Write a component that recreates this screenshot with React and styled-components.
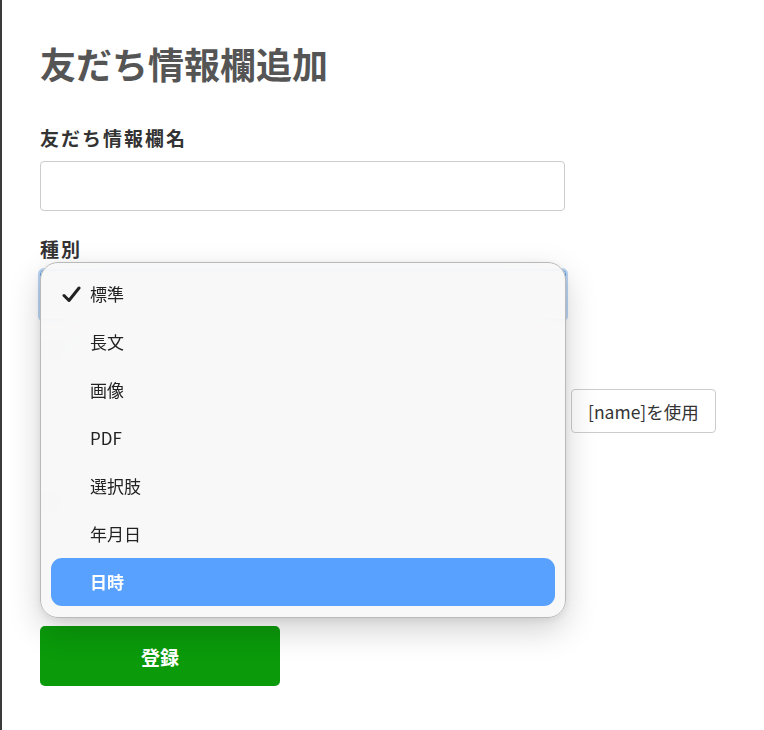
import React from 'react';
import styled, { createGlobalStyle } from 'styled-components';

const Global = createGlobalStyle`
  body {
    margin: 0;
    background: #fff;
    font-family: "Noto Sans CJK JP", "Noto Sans", sans-serif;
    color: #333;
  }
`;

const Page = styled.div`
  min-height: 730px;
  border-left: 2px solid #3a3a3a;
  padding: 38px 0 40px 38px;
  box-sizing: border-box;
`;

const Title = styled.h1`
  margin: 0;
  font-size: 36px;
  line-height: 50px;
  font-weight: 700;
  color: #555;
`;

const Label = styled.div`
  margin-top: ${p => p.$mt || 24}px;
  font-size: 19px;
  line-height: 28px;
  font-weight: 700;
  color: #333;
  letter-spacing: 2px;
`;

const TextInput = styled.div`
  margin-top: ${p => p.$mt ?? 9}px;
  width: 525px;
  height: ${p => p.$h || 50}px;
  border: 1px solid #ccc;
  border-radius: 4px;
  box-sizing: border-box;
  background: #fff;
`;

const Blob = styled.div`
  margin-top: ${p => p.$mt}px;
  width: ${p => p.$w}px;
  height: 20px;
  border-radius: 6px;
  background: #e4e4e4;
`;

const SelectWrap = styled.div`
  position: relative;
  margin-top: 7px;
  width: 526px;
`;

const SelectBox = styled.div`
  height: 50px;
  border: 1px solid #5b9be0;
  box-shadow: 0 0 0 2px rgba(80, 150, 230, 0.4);
  border-radius: 4px;
  box-sizing: border-box;
  background: #fff;
`;

const Row = styled.div`
  display: flex;
  align-items: center;
  gap: 6px;
  margin-top: 25px;
`;

const SmallButton = styled.button`
  height: 44px;
  padding: 0 16px;
  border: 1px solid #ccc;
  border-radius: 4px;
  background: #fff;
  font-family: "Noto Sans CJK JP", sans-serif;
  font-size: 17.5px;
  color: #333;
`;

const Submit = styled.button`
  display: block;
  margin-top: 53px;
  width: 240px;
  height: 60px;
  border: none;
  border-radius: 5px;
  background: #0a9a0a;
  color: #fff;
  font-family: "Noto Sans CJK JP", sans-serif;
  font-size: 19px;
  font-weight: 700;
`;

const Popup = styled.ul`
  position: absolute;
  top: -8px;
  left: 0;
  width: 526px;
  margin: 0;
  padding: 7px 10px 11px;
  list-style: none;
  box-sizing: border-box;
  border: 1px solid #b9b9b9;
  border-radius: 18px;
  background: rgba(247, 247, 247, 0.93);
  backdrop-filter: blur(24px);
  box-shadow: 0 12px 32px rgba(0, 0, 0, 0.18), 0 2px 8px rgba(0, 0, 0, 0.08);
  z-index: 10;
`;

const Item = styled.li`
  position: relative;
  height: 48px;
  display: flex;
  align-items: center;
  padding-left: 39px;
  padding-bottom: 2px;
  box-sizing: border-box;
  border-radius: 11px;
  font-size: 17px;
  color: ${p => (p.$active ? '#fff' : '#222')};
  background: ${p => (p.$active ? '#59a1fe' : 'transparent')};
  font-weight: ${p => (p.$active ? 700 : 400)};
`;

const Check = styled.svg`
  position: absolute;
  left: 11px;
  top: 16px;
  width: 19px;
  height: 17px;
`;

const options = ['標準', '長文', '画像', 'PDF', '選択肢', '年月日', '日時'];

export default function App() {
  return (
    <>
      <Global />
      <Page>
        <Title>友だち情報欄追加</Title>
        <Label $mt={36}>友だち情報欄名</Label>
        <TextInput />
        <Label>種別</Label>
        <SelectWrap>
          <SelectBox />
          <Popup>
            {options.map((o, i) => (
              <Item key={o} $active={i === options.length - 1}>
                {i === 0 && (
                  <Check viewBox="0 0 19 17">
                    <path d="M2 9.5 L7 14.5 L17 2" fill="none" stroke="#222" strokeWidth="3" strokeLinecap="round" strokeLinejoin="round" />
                  </Check>
                )}
                {o}
              </Item>
            ))}
          </Popup>
        </SelectWrap>
        <Blob $mt={20} $w={140} />
        <Row>
          <TextInput $mt={0} $h={52} />
          <SmallButton>[name]を使用</SmallButton>
        </Row>
        <Blob $mt={54} $w={60} />
        <TextInput $mt={12} />
        <Submit>登録</Submit>
      </Page>
    </>
  );
}
